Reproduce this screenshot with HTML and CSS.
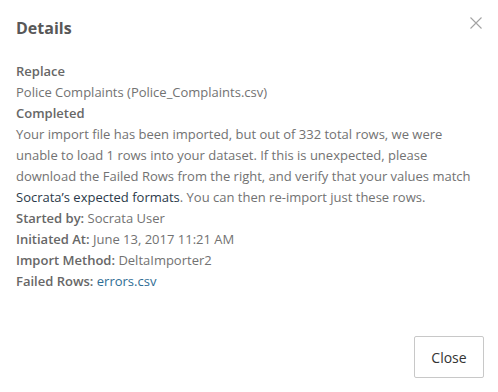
FILE: index.html
```html
<!DOCTYPE html>
<html>
<head>
<meta charset="utf-8">
<link rel="stylesheet" href="styles.css">
</head>
<body>
<div class="modal">
  <div class="header">
    <h1 class="title">Details</h1>
    <button class="close-x" aria-label="Close">
      <svg width="12" height="12" viewBox="0 0 12 12"><path d="M0.5 0.5 L11.5 11.5 M11.5 0.5 L0.5 11.5" stroke="#a3a3a3" stroke-width="1.1" fill="none"/></svg>
    </button>
  </div>
  <div class="content">
    <div class="label">Replace</div>
    <div>Police Complaints (Police_Complaints.csv)</div>
    <div class="label">Completed</div>
    <div>Your import file has been imported, but out of 332 total rows, we were unable to load 1 rows into your dataset. If this is unexpected, please download the Failed Rows from the right, and verify that your values match <span class="dark">Socrata’s expected formats</span>. You can then re-import just these rows.</div>
    <div><span class="label">Started by:</span> Socrata User</div>
    <div><span class="label">Initiated At:</span> June 13, 2017 11:21 AM</div>
    <div><span class="label">Import Method:</span> DeltaImporter2</div>
    <div><span class="label">Failed Rows:</span> <span class="link">errors.csv</span></div>
  </div>
  <div class="footer">
    <button class="btn">Close</button>
  </div>
</div>
</body>
</html>
```
FILE: styles.css
```css
html, body {
  margin: 0;
  padding: 0;
  background: #fff;
}
body {
  font-family: "Open Sans", "Liberation Sans", sans-serif;
  width: 498px;
  height: 392px;
  overflow: hidden;
}
.modal {
  display: flex;
  flex-direction: column;
  height: 392px;
  box-sizing: border-box;
  padding: 0 14px 0 16px;
}
.header {
  display: flex;
  justify-content: space-between;
  align-items: flex-start;
  padding-top: 15px;
  height: 47px;
  box-sizing: border-box;
}
.title {
  margin: 0;
  font-size: 16px;
  font-weight: 700;
  color: #585858;
  line-height: 26px;
}
.close-x {
  border: 0;
  background: none;
  padding: 0;
  margin-top: 2px;
  margin-right: 2px;
  width: 12px;
  height: 12px;
  display: block;
}
.close-x svg { display: block; }
.content {
  padding-top: 14px;
  font-size: 13px;
  line-height: 21px;
  color: #727272;
  width: 460px;
}
.label {
  font-weight: 600;
  color: #676767;
}
.dark { color: #2b3a4a; }
.link { color: #2f6d94; }
.footer {
  margin-top: auto;
  display: flex;
  justify-content: flex-end;
  padding-bottom: 14px;
}
.btn {
  font-family: "Open Sans", "Liberation Sans", sans-serif;
  font-size: 14px;
  color: #333;
  background: #fff;
  border: 1px solid #c8c8c8;
  border-radius: 2px;
  width: 70px;
  height: 42px;
  padding: 0;
}
```
